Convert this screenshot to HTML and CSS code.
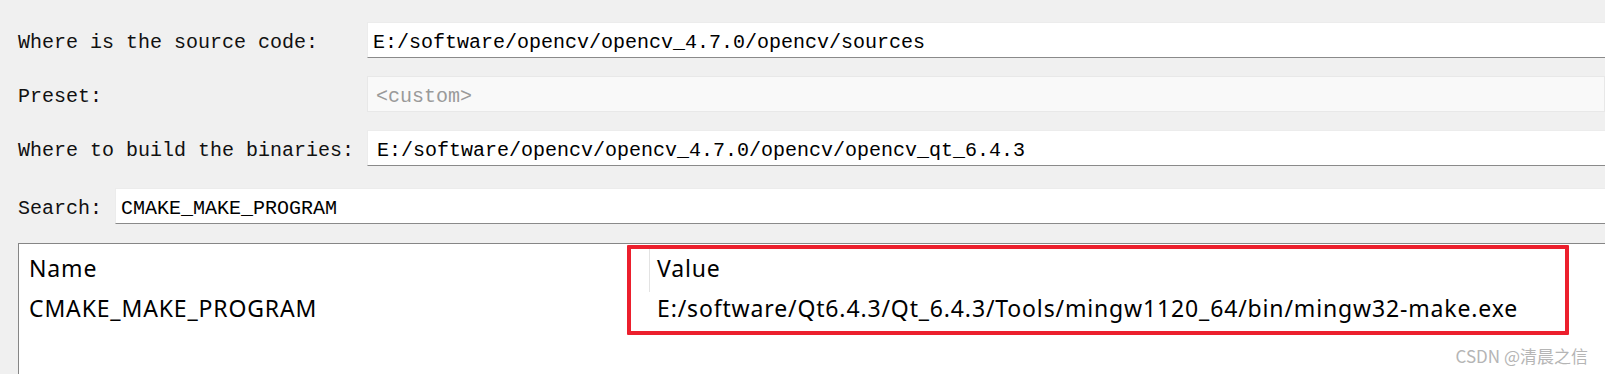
FILE: index.html
```html
<!DOCTYPE html>
<html>
<head>
<meta charset="utf-8">
<link rel="stylesheet" href="styles.css">
</head>
<body>
<div class="page">
  <div class="form">
    <div class="row row-gap1">
      <div class="label label-wide">Where is the source code:</div>
      <div class="field">E:/software/opencv/opencv_4.7.0/opencv/sources</div>
    </div>
    <div class="row row-gap1">
      <div class="label label-wide">Preset:</div>
      <div class="field field-disabled">&lt;custom&gt;</div>
    </div>
    <div class="row row-gap2">
      <div class="label label-wide">Where to build the binaries:</div>
      <div class="field field-combo">E:/software/opencv/opencv_4.7.0/opencv/opencv_qt_6.4.3</div>
    </div>
    <div class="row row-gap3">
      <div class="label label-search">Search:</div>
      <div class="field">CMAKE_MAKE_PROGRAM</div>
    </div>
  </div>
  <div class="table">
    <div class="trow thead">
      <div class="cell cell-name">Name</div>
      <div class="cell cell-value">Value</div>
    </div>
    <div class="trow tdata">
      <div class="cell cell-name">CMAKE_MAKE_PROGRAM</div>
      <div class="cell cell-value">E:/software/Qt6.4.3/Qt_6.4.3/Tools/mingw1120_64/bin/mingw32-make.exe</div>
    </div>
  </div>
  <div class="highlight"></div>
  <div class="watermark">CSDN @清晨之信</div>
</div>
</body>
</html>
```

FILE: styles.css
```css
html, body {
  margin: 0;
  padding: 0;
  height: 100%;
  background: #f0f0f0;
  overflow: hidden;
}

.page {
  position: relative;
  height: 374px;
  display: flex;
  flex-direction: column;
}

.form {
  display: flex;
  flex-direction: column;
  padding: 22px 0 0 18px;
}

.row {
  display: flex;
  align-items: stretch;
  height: 36px;
}

.row-gap1 { margin-bottom: 18px; }
.row-gap2 { margin-bottom: 22px; }
.row-gap3 { margin-bottom: 19px; }

.label {
  font-family: "Liberation Mono", monospace;
  font-size: 20px;
  color: #111;
  display: flex;
  align-items: center;
  flex: none;
  box-sizing: border-box;
  padding-top: 5px;
}

.label-wide { width: 349px; }
.label-search { width: 97px; }

.field {
  flex: 1;
  box-sizing: border-box;
  background: #fff;
  border-top: 1px solid #ececec;
  border-left: 1px solid #ececec;
  border-bottom: 1px solid #8a8a8a;
  font-family: "Liberation Mono", monospace;
  font-size: 20px;
  color: #000;
  display: flex;
  align-items: center;
  padding-left: 5px;
  padding-top: 5px;
  white-space: nowrap;
}

.field-disabled {
  background: #f9f9f9;
  border: 1px solid #e8e8e8;
  color: #9a9a9a;
  padding-left: 8px;
}

.field-combo {
  padding-left: 9px;
}

.table {
  flex: 1;
  margin-left: 18px;
  background: #fff;
  border-top: 1px solid #868686;
  border-left: 1px solid #868686;
  padding-top: 4px;
  font-family: "Noto Sans", sans-serif;
  font-size: 23px;
  letter-spacing: 0.85px;
  color: #000;
}

.trow {
  display: grid;
  grid-template-columns: 630px 1fr;
}

.thead { height: 44px; }
.tdata { height: 33px; }

.cell {
  display: flex;
  align-items: center;
  white-space: nowrap;
  line-height: 1;
}

.thead .cell { padding-bottom: 4px; }

.cell-name { padding-left: 10px; }

.thead .cell-value {
  border-left: 1px solid #e3e3e3;
  padding-left: 7px;
}

.tdata .cell-value { padding-left: 8px; }

.highlight {
  position: absolute;
  left: 627px;
  top: 245px;
  width: 942px;
  height: 90px;
  box-sizing: border-box;
  border: 4px solid #ec1f2d;
  border-radius: 1px;
}

.watermark {
  position: absolute;
  right: 17px;
  bottom: 6px;
  font-family: "Noto Sans CJK SC", sans-serif;
  font-size: 17px;
  color: #b5b5b5;
}
```
